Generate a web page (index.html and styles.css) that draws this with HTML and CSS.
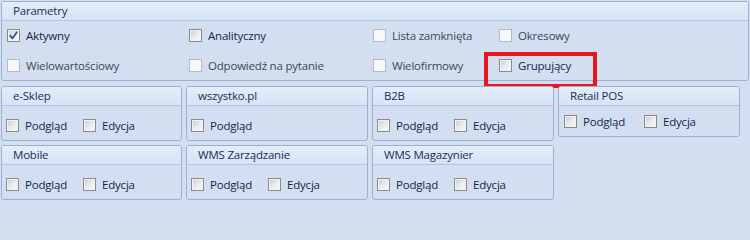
FILE: index.html
```html
<!DOCTYPE html>
<html lang="pl">
<head>
<meta charset="utf-8">
<title>Parametry</title>
<link rel="stylesheet" href="styles.css">
</head>
<body>
<div class="page">
  <section class="panel params">
    <div class="panel-head">Parametry</div>
    <div class="params-grid">
      <div class="opt"><span class="cb"><svg viewBox="0 0 11 11" width="11" height="11"><path d="M2.2 5.6 L4.4 8.4 L8.8 2.2" fill="none" stroke="#2a4e9e" stroke-width="1.7" stroke-linecap="round" stroke-linejoin="round"/></svg></span><span class="lbl">Aktywny</span></div>
      <div class="opt"><span class="cb"></span><span class="lbl">Analityczny</span></div>
      <div class="opt"><span class="cb cb--off"></span><span class="lbl lbl--off">Lista zamknięta</span></div>
      <div class="opt"><span class="cb cb--off"></span><span class="lbl lbl--off">Okresowy</span></div>
      <div class="opt"><span class="cb cb--off"></span><span class="lbl lbl--off">Wielowartościowy</span></div>
      <div class="opt"><span class="cb cb--off"></span><span class="lbl lbl--off">Odpowiedź na pytanie</span></div>
      <div class="opt"><span class="cb cb--off"></span><span class="lbl lbl--off">Wielofirmowy</span></div>
      <div class="opt opt--marked"><span class="cb"></span><span class="lbl">Grupujący</span></div>
    </div>
  </section>

  <div class="groups">
    <section class="panel group">
      <div class="panel-head">e-Sklep</div>
      <div class="group-body">
        <div class="opt opt--first"><span class="cb"></span><span class="lbl">Podgląd</span></div>
        <div class="opt"><span class="cb"></span><span class="lbl">Edycja</span></div>
      </div>
    </section>
    <section class="panel group">
      <div class="panel-head">wszystko.pl</div>
      <div class="group-body">
        <div class="opt opt--first"><span class="cb"></span><span class="lbl">Podgląd</span></div>
      </div>
    </section>
    <section class="panel group">
      <div class="panel-head">B2B</div>
      <div class="group-body">
        <div class="opt opt--first"><span class="cb"></span><span class="lbl">Podgląd</span></div>
        <div class="opt"><span class="cb"></span><span class="lbl">Edycja</span></div>
      </div>
    </section>
    <section class="panel group group--compact">
      <div class="panel-head">Retail POS</div>
      <div class="group-body">
        <div class="opt opt--first"><span class="cb"></span><span class="lbl">Podgląd</span></div>
        <div class="opt"><span class="cb"></span><span class="lbl">Edycja</span></div>
      </div>
    </section>
    <section class="panel group">
      <div class="panel-head">Mobile</div>
      <div class="group-body">
        <div class="opt opt--first"><span class="cb"></span><span class="lbl">Podgląd</span></div>
        <div class="opt"><span class="cb"></span><span class="lbl">Edycja</span></div>
      </div>
    </section>
    <section class="panel group">
      <div class="panel-head">WMS Zarządzanie</div>
      <div class="group-body">
        <div class="opt opt--first"><span class="cb"></span><span class="lbl">Podgląd</span></div>
        <div class="opt"><span class="cb"></span><span class="lbl">Edycja</span></div>
      </div>
    </section>
    <section class="panel group">
      <div class="panel-head">WMS Magazynier</div>
      <div class="group-body">
        <div class="opt opt--first"><span class="cb"></span><span class="lbl">Podgląd</span></div>
        <div class="opt"><span class="cb"></span><span class="lbl">Edycja</span></div>
      </div>
    </section>
  </div>
</div>
</body>
</html>
```

FILE: styles.css
```css
* { box-sizing: border-box; }

html, body {
  margin: 0;
  padding: 0;
  background: #d3dff0;
  height: 203px;
  overflow: hidden;
}

body {
  font-family: "Open Sans", "Noto Sans", sans-serif;
  font-size: 11.5px;
  letter-spacing: -0.2px;
  color: #13264a;
  width: 750px;
}

.page {
  padding: 1px 0 0 1px;
}

.panel {
  border: 1px solid #9cb1d0;
  border-radius: 3px;
  background: #d3dff0;
  position: relative;
}

.panel-head {
  height: 19px;
  line-height: 17px;
  padding-left: 11px;
  border-bottom: 1px solid #b1c5e1;
  background: linear-gradient(#e3ecf9, #d7e4f6);
  color: #172f55;
  border-radius: 2px 2px 0 0;
}

.params {
  width: 748px;
  height: 80px;
}

.params-grid {
  display: grid;
  grid-template-columns: 182px 184px 126px 1fr;
  grid-template-rows: 29px 30px;
  align-items: center;
  padding-left: 5px;
}

.opt {
  display: flex;
  align-items: center;
  gap: 6px;
  height: 13px;
  position: relative;
}

.lbl {
  line-height: 13px;
  white-space: nowrap;
}

.lbl--off {
  color: #3d4658;
}

.cb {
  flex: none;
  width: 13px;
  height: 13px;
  border: 1px solid #8a8b8d;
  background: linear-gradient(135deg, #c6c9cd 0%, #e9eaec 50%, #fbfbfb 100%);
  box-shadow: inset 0 0 0 1px #f2f3f4;
  display: flex;
  align-items: center;
  justify-content: center;
}

.cb svg { display: block; }

.cb--off {
  border-color: #b7bac0;
  background: #f7f8f9;
  box-shadow: none;
}

.opt--marked::after {
  content: "";
  position: absolute;
  left: -15px;
  top: -7px;
  width: 105px;
  height: 28px;
  border: 4px solid #e8141e;
  pointer-events: none;
}

.groups {
  display: grid;
  grid-template-columns: 181px 182px 182px 182px;
  column-gap: 4px;
  row-gap: 4px;
  margin-top: 5px;
  align-items: start;
}

.group {
  height: 55px;
}

.group--compact {
  height: 51px;
}

.group-body {
  display: flex;
  padding: 13px 0 0 4px;
}

.group--compact .group-body {
  padding: 9px 0 0 5px;
}

.opt--first {
  width: 77px;
}

.group--compact .opt--first {
  width: 80px;
}
```
